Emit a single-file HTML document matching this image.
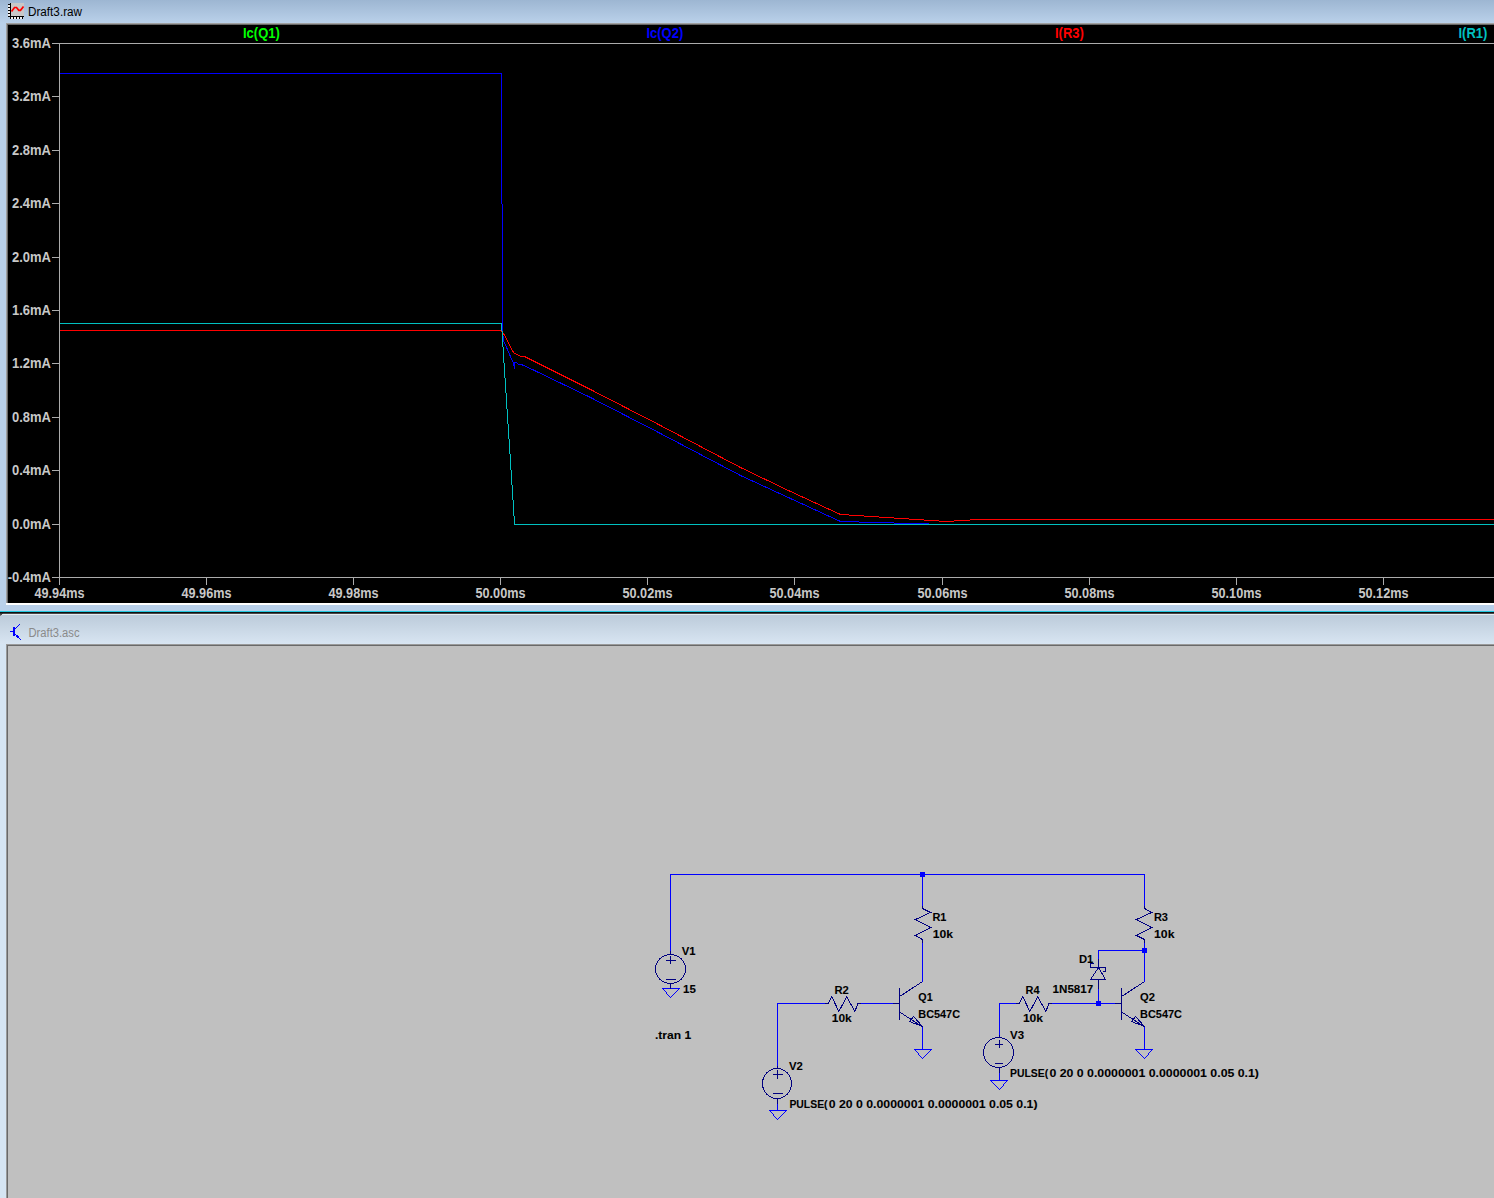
<!DOCTYPE html>
<html><head><meta charset="utf-8"><style>
html,body{margin:0;padding:0;}
body{width:1494px;height:1198px;position:relative;overflow:hidden;background:#c0c0c0;font-family:"Liberation Sans",sans-serif;}
.abs{position:absolute;}
.ax{font-family:"Liberation Sans",sans-serif;font-weight:bold;font-size:13px;fill:#c8c8c8;}
.tn{font-family:"Liberation Sans",sans-serif;font-weight:bold;font-size:13px;}
.sl{font-family:"Liberation Sans",sans-serif;font-weight:bold;font-size:10.5px;fill:#000;stroke:#000;stroke-width:0.08px;}
#tb1{left:0;top:0;width:1494px;height:605px;background:linear-gradient(#9db6d2,#bad1ea 23px,#bad1ea);}
#frame1b{left:0;top:605px;width:1494px;height:6px;background:#b9d0ea;}
#cyan{left:0;top:611px;width:1494px;height:1px;background:#20c8e0;}
#blk{left:0;top:612px;width:1494px;height:1px;background:#101010;}
#tb2{left:0;top:613px;width:1494px;height:585px;background:linear-gradient(#484848 0px,#484848 1px,#e6edf4 1px,#e6edf4 2px,#bccbda 2px,#d8e5f2 31px,#d6e5f3 31px,#d6e5f3);}
</style></head><body>
<div id="tb1" class="abs"></div>
<div id="frame1b" class="abs"></div>
<div id="cyan" class="abs"></div>
<div id="blk" class="abs"></div>
<div id="tb2" class="abs"></div>
<div class="abs" style="left:6px;top:23px;width:1488px;height:1px;background:#a0a0a0"></div>
<div class="abs" style="left:6px;top:23px;width:1px;height:580px;background:#a0a0a0"></div>
<div class="abs" style="left:7px;top:24px;width:1487px;height:1px;background:#696969"></div>
<div class="abs" style="left:7px;top:24px;width:1px;height:579px;background:#696969"></div>
<div class="abs" style="left:8px;top:25px;width:1486px;height:578px;background:#000"></div>
<div class="abs" style="left:6px;top:603px;width:1488px;height:2px;background:#fff"></div>
<div class="abs" style="left:0;top:613px;width:3px;height:1px;background:#303030"></div>
<div class="abs" style="left:0;top:614px;width:2px;height:1px;background:#505050"></div>
<div class="abs" style="left:0;top:615px;width:1px;height:1px;background:#808080"></div>
<div class="abs" style="left:6px;top:644px;width:1488px;height:554px;background:#c0c0c0"></div>
<div class="abs" style="left:6px;top:644px;width:1488px;height:1px;background:#9a9a9a"></div>
<div class="abs" style="left:6px;top:644px;width:1px;height:554px;background:#9a9a9a"></div>
<div class="abs" style="left:7px;top:645px;width:1487px;height:1px;background:#696969"></div>
<div class="abs" style="left:7px;top:645px;width:1px;height:553px;background:#696969"></div>
<svg class="abs" style="left:8px;top:3px" width="17" height="17" viewBox="0 0 17 17" shape-rendering="crispEdges">
<rect x="3" y="0" width="13" height="13" fill="#c8c8c8"/>
<rect x="0" y="1" width="2" height="1" fill="#000"/><rect x="0" y="4" width="2" height="1" fill="#000"/><rect x="0" y="7" width="2" height="1" fill="#000"/><rect x="0" y="10" width="2" height="1" fill="#000"/>
<rect x="0" y="2" width="2" height="2" fill="#eee"/><rect x="0" y="5" width="2" height="2" fill="#eee"/><rect x="0" y="8" width="2" height="2" fill="#eee"/><rect x="0" y="11" width="2" height="2" fill="#eee"/>
<rect x="2" y="0" width="1" height="16" fill="#000"/>
<rect x="0" y="13" width="16" height="1" fill="#000"/>
<rect x="2" y="14" width="1" height="2" fill="#000"/><rect x="5" y="14" width="1" height="2" fill="#000"/><rect x="8" y="14" width="1" height="2" fill="#000"/><rect x="11" y="14" width="1" height="2" fill="#000"/><rect x="14" y="14" width="1" height="2" fill="#000"/>
<rect x="3" y="14" width="2" height="2" fill="#eee"/><rect x="6" y="14" width="2" height="2" fill="#eee"/><rect x="9" y="14" width="2" height="2" fill="#eee"/><rect x="12" y="14" width="2" height="2" fill="#eee"/>
<path d="M3.5 8.5L6.5 4.5H8.5L10.8 7.3H12.5L15.5 3.5" stroke="#ff0000" stroke-width="1.7" fill="none" shape-rendering="auto"/>
</svg>
<svg class="abs" style="left:0;top:0" width="120" height="24"><text x="28" y="16" textLength="54" lengthAdjust="spacingAndGlyphs" font-family="Liberation Sans" font-size="12" fill="#000">Draft3.raw</text></svg>
<svg class="abs" style="left:0;top:615px" width="30" height="30" viewBox="0 615 30 30" shape-rendering="crispEdges">
<rect x="13" y="627" width="2" height="9" fill="#0000ff"/>
<rect x="10" y="631" width="3" height="1" fill="#0000ff"/>
<path d="M14.5 629.5L19.5 624.5" stroke="#0000ff" stroke-width="1"/>
<path d="M15.5 634.5L21.5 640.5" stroke="#0000ff" stroke-width="1"/>
<rect x="16" y="635" width="2" height="2" fill="#0000ff"/>
<rect x="18" y="636" width="1" height="2" fill="#0000ff"/>
<rect x="17" y="637" width="2" height="1" fill="#0000ff"/>
</svg>
<svg class="abs" style="left:0;top:615px" width="120" height="28"><text x="28.5" y="22" textLength="51" lengthAdjust="spacingAndGlyphs" font-family="Liberation Sans" font-size="12" fill="#8a8a8a">Draft3.asc</text></svg>
<svg class="abs" style="left:0;top:0" width="1494" height="610" viewBox="0 0 1494 610"><path d="M59.5 43V585 M52 43.5H1494 M52 577.5H1494 M52 43.5H59 M52 96.5H59 M52 150.5H59 M52 203.5H59 M52 257.5H59 M52 310.5H59 M52 363.5H59 M52 417.5H59 M52 470.5H59 M52 524.5H59 M52 577.5H59 M59.5 578V585 M206.5 578V585 M353.5 578V585 M500.5 578V585 M647.5 578V585 M794.5 578V585 M942.5 578V585 M1089.5 578V585 M1236.5 578V585 M1383.5 578V585" stroke="#acacac" stroke-width="1" fill="none" shape-rendering="crispEdges"/><path d="M59.5 330.5 L500.5 330.5 L503.5 333.5 L513.5 352.5 L514.5 353.5 L519.5 355.5 L520.5 356.5 L524.5 356.5 L534.5 361.5 L590.5 389.5 L660.5 425.5 L740.5 467.5 L790.5 491.5 L840.5 514.5 L848.5 514.5 L849.5 515.5 L863.5 515.5 L864.5 516.5 L878.5 516.5 L879.5 517.5 L893.5 517.5 L894.5 518.5 L908.5 518.5 L909.5 519.5 L923.5 519.5 L924.5 520.5 L938.5 520.5 L939.5 521.5 L953.5 521.5 L954.5 520.5 L969.5 520.5 L970.5 519.5 L1494.5 519.5" stroke="#ff0000" stroke-width="1" fill="none" shape-rendering="crispEdges"/><path d="M59.5 73.5 L501.5 73.5 L501.5 203.5 L502.5 204.5 L502.5 335.5 L503.5 336.5 L503.5 340.5 L513.5 363.5 L514.5 368.5 L514.5 362.5 L516.5 362.5 L518.5 364.5 L521.5 364.5 L534.5 370.5 L590.5 397.5 L660.5 433.5 L740.5 475.5 L790.5 498.5 L840.5 521.5 L858.5 521.5 L859.5 522.5 L893.5 522.5 L894.5 523.5 L928.5 523.5 L929.5 524.5 L1494.5 524.5" stroke="#0000ff" stroke-width="1" fill="none" shape-rendering="crispEdges"/><path d="M59.5 323.5 L501.5 323.5" stroke="#00c0c0" stroke-width="1" fill="none" shape-rendering="crispEdges"/><rect x="501" y="323" width="1" height="8" fill="#00c0c0"/><rect x="502" y="331" width="1" height="16" fill="#00c0c0"/><rect x="503" y="347" width="1" height="16" fill="#00c0c0"/><rect x="504" y="363" width="1" height="15" fill="#00c0c0"/><rect x="505" y="378" width="1" height="15" fill="#00c0c0"/><rect x="506" y="393" width="1" height="16" fill="#00c0c0"/><rect x="507" y="409" width="1" height="15" fill="#00c0c0"/><rect x="508" y="424" width="1" height="15" fill="#00c0c0"/><rect x="509" y="439" width="1" height="15" fill="#00c0c0"/><rect x="510" y="454" width="1" height="16" fill="#00c0c0"/><rect x="511" y="470" width="1" height="15" fill="#00c0c0"/><rect x="512" y="485" width="1" height="15" fill="#00c0c0"/><rect x="513" y="500" width="1" height="16" fill="#00c0c0"/><rect x="514" y="516" width="1" height="9" fill="#00c0c0"/><rect x="514" y="524" width="980" height="1" fill="#00c0c0"/><text transform="translate(51 48) scale(1 1.09)" text-anchor="end" class="ax">3.6mA</text><text transform="translate(51 101) scale(1 1.09)" text-anchor="end" class="ax">3.2mA</text><text transform="translate(51 155) scale(1 1.09)" text-anchor="end" class="ax">2.8mA</text><text transform="translate(51 208) scale(1 1.09)" text-anchor="end" class="ax">2.4mA</text><text transform="translate(51 262) scale(1 1.09)" text-anchor="end" class="ax">2.0mA</text><text transform="translate(51 315) scale(1 1.09)" text-anchor="end" class="ax">1.6mA</text><text transform="translate(51 368) scale(1 1.09)" text-anchor="end" class="ax">1.2mA</text><text transform="translate(51 422) scale(1 1.09)" text-anchor="end" class="ax">0.8mA</text><text transform="translate(51 475) scale(1 1.09)" text-anchor="end" class="ax">0.4mA</text><text transform="translate(51 529) scale(1 1.09)" text-anchor="end" class="ax">0.0mA</text><text transform="translate(51 582) scale(1 1.09)" text-anchor="end" class="ax">-0.4mA</text><text transform="translate(34.5 598) scale(1 1.09)" textLength="50" lengthAdjust="spacingAndGlyphs" class="ax">49.94ms</text><text transform="translate(181.5 598) scale(1 1.09)" textLength="50" lengthAdjust="spacingAndGlyphs" class="ax">49.96ms</text><text transform="translate(328.5 598) scale(1 1.09)" textLength="50" lengthAdjust="spacingAndGlyphs" class="ax">49.98ms</text><text transform="translate(475.5 598) scale(1 1.09)" textLength="50" lengthAdjust="spacingAndGlyphs" class="ax">50.00ms</text><text transform="translate(622.5 598) scale(1 1.09)" textLength="50" lengthAdjust="spacingAndGlyphs" class="ax">50.02ms</text><text transform="translate(769.5 598) scale(1 1.09)" textLength="50" lengthAdjust="spacingAndGlyphs" class="ax">50.04ms</text><text transform="translate(917.5 598) scale(1 1.09)" textLength="50" lengthAdjust="spacingAndGlyphs" class="ax">50.06ms</text><text transform="translate(1064.5 598) scale(1 1.09)" textLength="50" lengthAdjust="spacingAndGlyphs" class="ax">50.08ms</text><text transform="translate(1211.5 598) scale(1 1.09)" textLength="50" lengthAdjust="spacingAndGlyphs" class="ax">50.10ms</text><text transform="translate(1358.5 598) scale(1 1.09)" textLength="50" lengthAdjust="spacingAndGlyphs" class="ax">50.12ms</text><text transform="translate(261.4 38) scale(1 1.09)" text-anchor="middle" class="tn" fill="#00ff00">Ic(Q1)</text><text transform="translate(664.8 38) scale(1 1.09)" text-anchor="middle" class="tn" fill="#0000ff">Ic(Q2)</text><text transform="translate(1069.4 38) scale(1 1.09)" text-anchor="middle" class="tn" fill="#ff0000">I(R3)</text><text transform="translate(1472.9 38) scale(1 1.09)" text-anchor="middle" class="tn" fill="#00c0c0">I(R1)</text></svg><svg class="abs" style="left:0;top:0" width="1494" height="1198" viewBox="0 0 1494 1198"><rect x="670" y="874" width="475" height="1" fill="#0000ff"/><rect x="670" y="874" width="1" height="78" fill="#0000ff"/><rect x="922" y="874" width="1" height="32" fill="#0000ff"/><rect x="922" y="942" width="1" height="40" fill="#0000ff"/><rect x="922" y="1026" width="1" height="24" fill="#0000ff"/><rect x="777" y="1003" width="1" height="64" fill="#0000ff"/><rect x="777" y="1003" width="48" height="1" fill="#0000ff"/><rect x="861" y="1003" width="33" height="1" fill="#0000ff"/><rect x="777" y="1103" width="1" height="8" fill="#0000ff"/><rect x="1144" y="874" width="1" height="32" fill="#0000ff"/><rect x="1144" y="942" width="1" height="40" fill="#0000ff"/><rect x="1098" y="950" width="47" height="1" fill="#0000ff"/><rect x="1098" y="950" width="1" height="10" fill="#0000ff"/><rect x="1098" y="988" width="1" height="16" fill="#0000ff"/><rect x="999" y="1003" width="1" height="33" fill="#0000ff"/><rect x="999" y="1003" width="17" height="1" fill="#0000ff"/><rect x="1052" y="1003" width="63" height="1" fill="#0000ff"/><rect x="1144" y="1026" width="1" height="24" fill="#0000ff"/><rect x="999" y="1072" width="1" height="9" fill="#0000ff"/><rect x="920" y="872" width="5" height="5" fill="#0000ff"/><rect x="1142" y="948" width="5" height="5" fill="#0000ff"/><rect x="1096" y="1001" width="5" height="5" fill="#0000ff"/><rect x="662" y="988" width="18" height="1" fill="#0000ff"/><rect x="678" y="989" width="1" height="1" fill="#0000ff"/><rect x="663" y="989" width="1" height="1" fill="#0000ff"/><rect x="677" y="990" width="1" height="1" fill="#0000ff"/><rect x="664" y="990" width="1" height="1" fill="#0000ff"/><rect x="676" y="991" width="1" height="1" fill="#0000ff"/><rect x="665" y="991" width="1" height="1" fill="#0000ff"/><rect x="675" y="992" width="1" height="1" fill="#0000ff"/><rect x="666" y="992" width="1" height="1" fill="#0000ff"/><rect x="674" y="993" width="1" height="1" fill="#0000ff"/><rect x="666" y="993" width="1" height="1" fill="#0000ff"/><rect x="673" y="994" width="1" height="1" fill="#0000ff"/><rect x="667" y="994" width="1" height="1" fill="#0000ff"/><rect x="672" y="995" width="1" height="1" fill="#0000ff"/><rect x="668" y="995" width="1" height="1" fill="#0000ff"/><rect x="671" y="996" width="1" height="1" fill="#0000ff"/><rect x="669" y="996" width="1" height="1" fill="#0000ff"/><rect x="670" y="997" width="1" height="1" fill="#0000ff"/><rect x="670" y="997" width="1" height="1" fill="#0000ff"/><rect x="914" y="1049" width="18" height="1" fill="#0000ff"/><rect x="930" y="1050" width="1" height="1" fill="#0000ff"/><rect x="915" y="1050" width="1" height="1" fill="#0000ff"/><rect x="929" y="1051" width="1" height="1" fill="#0000ff"/><rect x="916" y="1051" width="1" height="1" fill="#0000ff"/><rect x="928" y="1052" width="1" height="1" fill="#0000ff"/><rect x="917" y="1052" width="1" height="1" fill="#0000ff"/><rect x="927" y="1053" width="1" height="1" fill="#0000ff"/><rect x="918" y="1053" width="1" height="1" fill="#0000ff"/><rect x="926" y="1054" width="1" height="1" fill="#0000ff"/><rect x="918" y="1054" width="1" height="1" fill="#0000ff"/><rect x="925" y="1055" width="1" height="1" fill="#0000ff"/><rect x="919" y="1055" width="1" height="1" fill="#0000ff"/><rect x="924" y="1056" width="1" height="1" fill="#0000ff"/><rect x="920" y="1056" width="1" height="1" fill="#0000ff"/><rect x="923" y="1057" width="1" height="1" fill="#0000ff"/><rect x="921" y="1057" width="1" height="1" fill="#0000ff"/><rect x="922" y="1058" width="1" height="1" fill="#0000ff"/><rect x="922" y="1058" width="1" height="1" fill="#0000ff"/><rect x="769" y="1110" width="18" height="1" fill="#0000ff"/><rect x="785" y="1111" width="1" height="1" fill="#0000ff"/><rect x="770" y="1111" width="1" height="1" fill="#0000ff"/><rect x="784" y="1112" width="1" height="1" fill="#0000ff"/><rect x="771" y="1112" width="1" height="1" fill="#0000ff"/><rect x="783" y="1113" width="1" height="1" fill="#0000ff"/><rect x="772" y="1113" width="1" height="1" fill="#0000ff"/><rect x="782" y="1114" width="1" height="1" fill="#0000ff"/><rect x="773" y="1114" width="1" height="1" fill="#0000ff"/><rect x="781" y="1115" width="1" height="1" fill="#0000ff"/><rect x="773" y="1115" width="1" height="1" fill="#0000ff"/><rect x="780" y="1116" width="1" height="1" fill="#0000ff"/><rect x="774" y="1116" width="1" height="1" fill="#0000ff"/><rect x="779" y="1117" width="1" height="1" fill="#0000ff"/><rect x="775" y="1117" width="1" height="1" fill="#0000ff"/><rect x="778" y="1118" width="1" height="1" fill="#0000ff"/><rect x="776" y="1118" width="1" height="1" fill="#0000ff"/><rect x="777" y="1119" width="1" height="1" fill="#0000ff"/><rect x="777" y="1119" width="1" height="1" fill="#0000ff"/><rect x="1135" y="1049" width="18" height="1" fill="#0000ff"/><rect x="1136" y="1050" width="1" height="1" fill="#0000ff"/><rect x="1151" y="1050" width="1" height="1" fill="#0000ff"/><rect x="1137" y="1051" width="1" height="1" fill="#0000ff"/><rect x="1150" y="1051" width="1" height="1" fill="#0000ff"/><rect x="1138" y="1052" width="1" height="1" fill="#0000ff"/><rect x="1149" y="1052" width="1" height="1" fill="#0000ff"/><rect x="1139" y="1053" width="1" height="1" fill="#0000ff"/><rect x="1148" y="1053" width="1" height="1" fill="#0000ff"/><rect x="1140" y="1054" width="1" height="1" fill="#0000ff"/><rect x="1148" y="1054" width="1" height="1" fill="#0000ff"/><rect x="1141" y="1055" width="1" height="1" fill="#0000ff"/><rect x="1147" y="1055" width="1" height="1" fill="#0000ff"/><rect x="1142" y="1056" width="1" height="1" fill="#0000ff"/><rect x="1146" y="1056" width="1" height="1" fill="#0000ff"/><rect x="1143" y="1057" width="1" height="1" fill="#0000ff"/><rect x="1145" y="1057" width="1" height="1" fill="#0000ff"/><rect x="1144" y="1058" width="1" height="1" fill="#0000ff"/><rect x="1144" y="1058" width="1" height="1" fill="#0000ff"/><rect x="990" y="1080" width="18" height="1" fill="#0000ff"/><rect x="991" y="1081" width="1" height="1" fill="#0000ff"/><rect x="1006" y="1081" width="1" height="1" fill="#0000ff"/><rect x="992" y="1082" width="1" height="1" fill="#0000ff"/><rect x="1005" y="1082" width="1" height="1" fill="#0000ff"/><rect x="993" y="1083" width="1" height="1" fill="#0000ff"/><rect x="1004" y="1083" width="1" height="1" fill="#0000ff"/><rect x="994" y="1084" width="1" height="1" fill="#0000ff"/><rect x="1003" y="1084" width="1" height="1" fill="#0000ff"/><rect x="995" y="1085" width="1" height="1" fill="#0000ff"/><rect x="1003" y="1085" width="1" height="1" fill="#0000ff"/><rect x="996" y="1086" width="1" height="1" fill="#0000ff"/><rect x="1002" y="1086" width="1" height="1" fill="#0000ff"/><rect x="997" y="1087" width="1" height="1" fill="#0000ff"/><rect x="1001" y="1087" width="1" height="1" fill="#0000ff"/><rect x="998" y="1088" width="1" height="1" fill="#0000ff"/><rect x="1000" y="1088" width="1" height="1" fill="#0000ff"/><rect x="999" y="1089" width="1" height="1" fill="#0000ff"/><rect x="999" y="1089" width="1" height="1" fill="#0000ff"/><rect x="670" y="951" width="1" height="4" fill="#000080"/><rect x="670" y="983" width="1" height="6" fill="#000080"/><ellipse cx="670.5" cy="969.0" rx="15.0" ry="14.5" stroke="#000080" stroke-width="1" fill="none" shape-rendering="crispEdges"/><rect x="666" y="960" width="10" height="1" fill="#000080"/><rect x="670" y="956" width="1" height="8" fill="#000080"/><rect x="666" y="979" width="10" height="1" fill="#000080"/><rect x="777" y="1066" width="1" height="3" fill="#000080"/><rect x="777" y="1098" width="1" height="6" fill="#000080"/><ellipse cx="777.0" cy="1083.5" rx="14.5" ry="15.0" stroke="#000080" stroke-width="1" fill="none" shape-rendering="crispEdges"/><rect x="773" y="1074" width="10" height="1" fill="#000080"/><rect x="777" y="1070" width="1" height="9" fill="#000080"/><rect x="773" y="1093" width="10" height="1" fill="#000080"/><rect x="999" y="1035" width="1" height="3" fill="#000080"/><rect x="999" y="1067" width="1" height="6" fill="#000080"/><ellipse cx="998.5" cy="1052.5" rx="15.0" ry="15.0" stroke="#000080" stroke-width="1" fill="none" shape-rendering="crispEdges"/><rect x="995" y="1044" width="8" height="1" fill="#000080"/><rect x="999" y="1040" width="1" height="8" fill="#000080"/><rect x="995" y="1063" width="8" height="1" fill="#000080"/><path d="M922.50 905.50 L922.50 908.50 L930.50 912.50 L915.50 919.50 L930.50 927.50 L915.50 935.50 L922.50 939.50 L922.50 942.50" stroke="#000080" stroke-width="1" fill="none" shape-rendering="crispEdges"/><path d="M1144.50 905.50 L1144.50 908.50 L1151.50 912.50 L1136.50 919.50 L1151.50 927.50 L1136.50 935.50 L1144.50 939.50 L1144.50 942.50" stroke="#000080" stroke-width="1" fill="none" shape-rendering="crispEdges"/><path d="M824.50 1003.50 L828.00 1003.50 L831.80 996.70 L838.80 1011.50 L846.80 996.70 L854.80 1011.50 L858.00 1003.50 L861.00 1003.50" stroke="#000080" stroke-width="1" fill="none" shape-rendering="crispEdges"/><path d="M1015.50 1003.50 L1019.00 1003.50 L1022.80 996.70 L1029.80 1011.50 L1037.80 996.70 L1045.80 1011.50 L1049.00 1003.50 L1052.00 1003.50" stroke="#000080" stroke-width="1" fill="none" shape-rendering="crispEdges"/><path d="M922.50 981.50 L900.50 996.00" stroke="#000080" stroke-width="1" fill="none" shape-rendering="crispEdges"/><rect x="899" y="988" width="1" height="32" fill="#000080"/><rect x="893" y="1003" width="7" height="1" fill="#000080"/><path d="M900.50 1012.50 L922.50 1027.00" stroke="#000080" stroke-width="1" fill="none" shape-rendering="crispEdges"/><path d="M913.5 1016.5L909.5 1021.5L922.5 1026.5Z" stroke="#000080" stroke-width="1" fill="none" shape-rendering="crispEdges"/><path d="M1144.50 981.50 L1122.50 996.00" stroke="#000080" stroke-width="1" fill="none" shape-rendering="crispEdges"/><rect x="1121" y="988" width="1" height="32" fill="#000080"/><rect x="1115" y="1003" width="7" height="1" fill="#000080"/><path d="M1122.50 1012.50 L1144.50 1027.00" stroke="#000080" stroke-width="1" fill="none" shape-rendering="crispEdges"/><path d="M1135.5 1016.5L1131.5 1021.5L1144.5 1026.5Z" stroke="#000080" stroke-width="1" fill="none" shape-rendering="crispEdges"/><rect x="1098" y="959" width="1" height="9" fill="#000080"/><rect x="1090" y="967" width="16" height="1" fill="#000080"/><rect x="1090" y="963" width="1" height="5" fill="#000080"/><rect x="1090" y="963" width="4" height="1" fill="#000080"/><rect x="1105" y="967" width="1" height="5" fill="#000080"/><rect x="1103" y="971" width="3" height="1" fill="#000080"/><path d="M1098.5 967.5L1090.5 979.5L1105.5 979.5Z" stroke="#000080" stroke-width="1" fill="none" shape-rendering="crispEdges"/><rect x="1098" y="979" width="1" height="10" fill="#000080"/><text x="681.8" y="955" textLength="13.8" lengthAdjust="spacingAndGlyphs" class="sl">V1</text><text x="683.0" y="993" textLength="12.8" lengthAdjust="spacingAndGlyphs" class="sl">15</text><text x="932.4" y="921" textLength="14.0" lengthAdjust="spacingAndGlyphs" class="sl">R1</text><text x="932.7" y="938" textLength="20.3" lengthAdjust="spacingAndGlyphs" class="sl">10k</text><text x="918.3" y="1001" textLength="14.3" lengthAdjust="spacingAndGlyphs" class="sl">Q1</text><text x="918.3" y="1018" textLength="41.7" lengthAdjust="spacingAndGlyphs" class="sl">BC547C</text><text x="834.4" y="994" textLength="14.4" lengthAdjust="spacingAndGlyphs" class="sl">R2</text><text x="831.8" y="1022" textLength="20.0" lengthAdjust="spacingAndGlyphs" class="sl">10k</text><text x="789.0" y="1070" textLength="13.8" lengthAdjust="spacingAndGlyphs" class="sl">V2</text><text x="789.4" y="1108" textLength="38.2" lengthAdjust="spacingAndGlyphs" class="sl">PULSE(</text><text x="828.8" y="1108" textLength="208.7" lengthAdjust="spacingAndGlyphs" class="sl">0 20 0 0.0000001 0.0000001 0.05 0.1)</text><text x="655.0" y="1039" textLength="36.2" lengthAdjust="spacingAndGlyphs" class="sl">.tran 1</text><text x="1153.9" y="921" textLength="14.1" lengthAdjust="spacingAndGlyphs" class="sl">R3</text><text x="1154.0" y="938" textLength="20.5" lengthAdjust="spacingAndGlyphs" class="sl">10k</text><text x="1078.9" y="963" textLength="14.4" lengthAdjust="spacingAndGlyphs" class="sl">D1</text><text x="1052.6" y="993" textLength="40.6" lengthAdjust="spacingAndGlyphs" class="sl">1N5817</text><text x="1140.1" y="1001" textLength="14.9" lengthAdjust="spacingAndGlyphs" class="sl">Q2</text><text x="1140.1" y="1018" textLength="41.9" lengthAdjust="spacingAndGlyphs" class="sl">BC547C</text><text x="1025.6" y="994" textLength="14.0" lengthAdjust="spacingAndGlyphs" class="sl">R4</text><text x="1022.9" y="1022" textLength="20.2" lengthAdjust="spacingAndGlyphs" class="sl">10k</text><text x="1010.0" y="1039" textLength="14.0" lengthAdjust="spacingAndGlyphs" class="sl">V3</text><text x="1010.0" y="1077" textLength="38.2" lengthAdjust="spacingAndGlyphs" class="sl">PULSE(</text><text x="1049.4" y="1077" textLength="209.6" lengthAdjust="spacingAndGlyphs" class="sl">0 20 0 0.0000001 0.0000001 0.05 0.1)</text></svg>
</body></html>
